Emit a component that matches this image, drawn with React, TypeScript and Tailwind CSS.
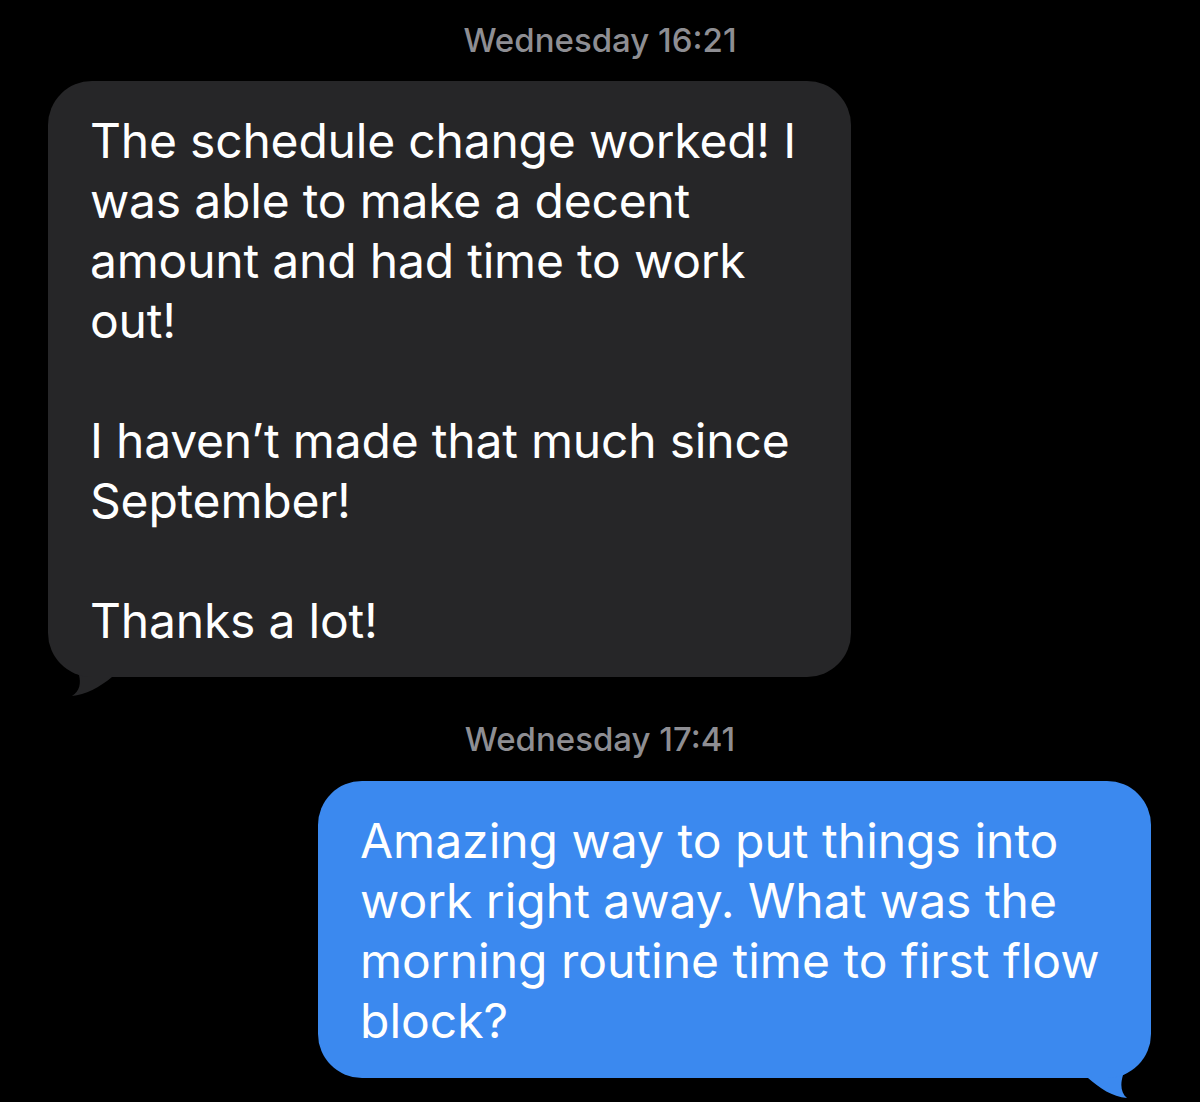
import React from "react";

const font = { fontFamily: "Inter, 'Noto Sans', sans-serif" };

export default function App() {
  const grayLines = [
    "The schedule change worked! I",
    "was able to make a decent",
    "amount and had time to work",
    "out!",
    "",
    "I haven\u2019t made that much since",
    "September!",
    "",
    "Thanks a lot!",
  ];
  const blueLines = [
    "Amazing way to put things into",
    "work right away. What was the",
    "morning routine time to first flow",
    "block?",
  ];
  return (
    <div className="w-[1200px] h-[1102px] bg-black flex flex-col overflow-hidden" style={font}>
      <div className="mt-[20px] h-[40px] leading-[40px] text-center text-[33px] font-medium text-[#8e8e93]">
        Wednesday 16:21
      </div>
      <div className="relative mt-[21px] ml-[48px] w-[803px]">
        <div className="relative z-10 bg-[#262628] rounded-[44px] pl-[42px] pr-[20px] pt-[30px] pb-[26px] text-white text-[48px] leading-[60px] tracking-[-0.2px]">
          {grayLines.map((l, i) => (
            <div key={i} className="h-[60px] whitespace-nowrap">{l}</div>
          ))}
        </div>
        <svg className="absolute left-[-3px] bottom-[-22px]" width="100" height="85" viewBox="45 615 100 85">
          <path d="M49 615 L49 620 C50 645 60 662 79 676 C81 684 80 692 72 697 C85 696 100 688 112 678 L140 678 L140 615 Z" fill="#262628" />
        </svg>
      </div>
      <div className="mt-[42px] h-[40px] leading-[40px] text-center text-[33px] font-medium text-[#8e8e93]">
        Wednesday 17:41
      </div>
      <div className="relative mt-[22px] ml-[318px] w-[833px]">
        <div className="relative z-10 bg-[#3b89ef] rounded-[44px] pl-[42px] pr-[20px] pt-[30px] pb-[27px] text-white text-[48px] leading-[60px]">
          {blueLines.map((l, i) => (
            <div key={i} className="h-[60px] whitespace-nowrap">{l}</div>
          ))}
        </div>
        <svg className="absolute right-[-9px] bottom-[-22px]" width="100" height="85" viewBox="1060 1015 100 85">
          <path d="M1151 1015 L1151 1020 C1150 1050 1140 1065 1123 1075 C1120 1085 1121 1093 1127 1098 C1112 1097 1100 1088 1088 1078 L1060 1078 L1060 1015 Z" fill="#3b89ef" />
        </svg>
      </div>
    </div>
  );
}
